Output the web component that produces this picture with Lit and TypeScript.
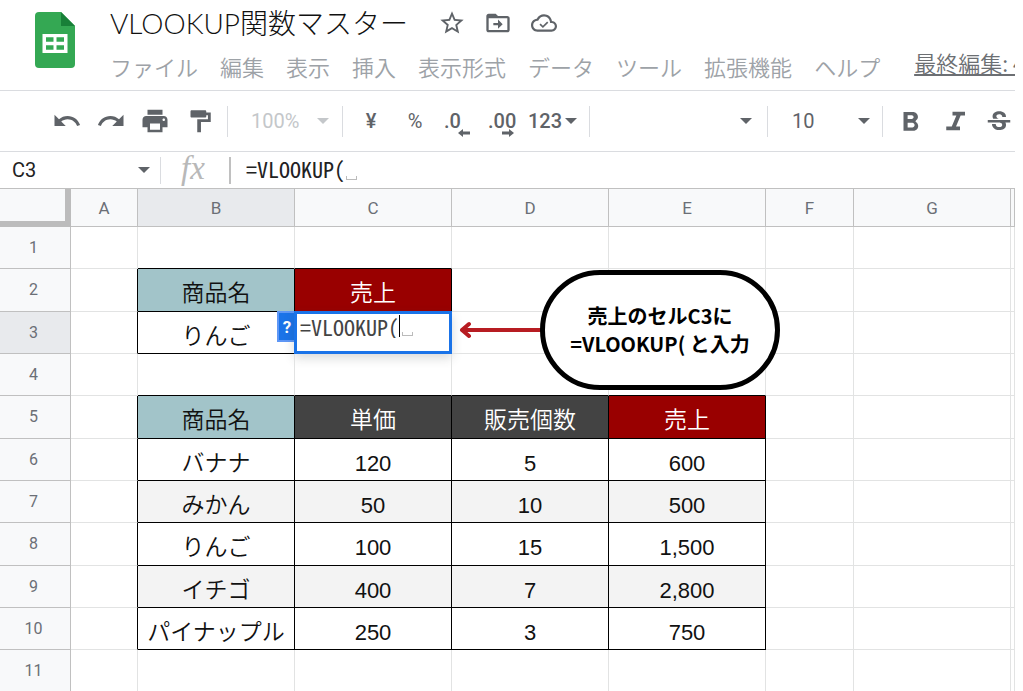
import { LitElement, html, css, svg } from "lit";
import { customElement } from "lit/decorators.js";
import { classMap } from "lit/directives/class-map.js";

type Tone = "teal" | "red" | "dark" | "plain" | "band";
interface Cell {
  text: string;
  tone: Tone;
}

const COLUMNS = ["A", "B", "C", "D", "E", "F", "G", ""];
const ROW_COUNT = 11;
const MENUS = ["ファイル", "編集", "表示", "挿入", "表示形式", "データ", "ツール", "拡張機能", "ヘルプ"];
const FORMULA = "=VLOOKUP(";

const PRODUCTS = [
  ["バナナ", "120", "5", "600"],
  ["みかん", "50", "10", "500"],
  ["りんご", "100", "15", "1,500"],
  ["イチゴ", "400", "7", "2,800"],
  ["パイナップル", "250", "3", "750"],
];

const cells = new Map<string, Cell>();
const put = (ref: string, text: string, tone: Tone) => cells.set(ref, { text, tone });
put("B2", "商品名", "teal");
put("C2", "売上", "red");
put("B3", "りんご", "plain");
put("C3", "", "plain");
put("B5", "商品名", "teal");
put("C5", "単価", "dark");
put("D5", "販売個数", "dark");
put("E5", "売上", "red");
PRODUCTS.forEach((product, i) =>
  product.forEach((text, j) => put(`${COLUMNS[j + 1]}${i + 6}`, text, i % 2 ? "band" : "plain"))
);

const caret = html`<svg class="caret" viewBox="0 0 12 6" aria-hidden="true"><path d="M0 0h12L6 6z" /></svg>`;

const icon = (shape: unknown, size = "") =>
  html`<svg class="icon ${size}" viewBox="0 0 24 24" aria-hidden="true">${shape}</svg>`;

const ICONS = {
  star: svg`<path d="M22 9.24l-7.19-.62L12 2 9.19 8.63 2 9.24l5.46 4.73L5.82 21 12 17.27 18.18 21l-1.63-7.03L22 9.24zM12 15.4l-3.76 2.27 1-4.28-3.32-2.88 4.38-.38L12 6.1l1.71 4.04 4.38.38-3.32 2.88 1 4.28L12 15.4z"/>`,
  move: svg`<path d="M20 6h-8l-2-2H4c-1.1 0-2 .9-2 2v12c0 1.1.9 2 2 2h16c1.1 0 2-.9 2-2V8c0-1.1-.9-2-2-2zm0 12H4V8h16v10zM12 17l4-4-4-4v3H8v2h4z"/><path d="M3 5h7l2 2.500H3z"/>`,
  cloud: svg`<path d="M19.35 10.04C18.67 6.59 15.64 4 12 4 9.11 4 6.6 5.64 5.35 8.04 2.34 8.36 0 10.91 0 14c0 3.31 2.69 6 6 6h13c2.76 0 5-2.24 5-5 0-2.64-2.05-4.78-4.65-4.96zM19 18H6c-2.21 0-4-1.79-4-4 0-2.05 1.53-3.76 3.56-3.97l1.07-.11.5-.95C8.08 7.14 9.94 6 12 6c2.62 0 4.88 1.86 5.39 4.43l.3 1.5 1.53.11c1.56.1 2.78 1.41 2.78 2.96 0 1.65-1.35 3-3 3zm-8-3.5l-2.100-2.100-1.100 1.100 3.200 3.200 5-5-1.100-1.100z"/>`,
  undo: svg`<path d="M12.5 8c-2.65 0-5.05.99-6.9 2.6L2 7v9h9l-3.62-3.62c1.39-1.16 3.16-1.88 5.12-1.88 3.54 0 6.55 2.31 7.6 5.5l2.37-.78C21.08 11.03 17.15 8 12.5 8z"/>`,
  redo: svg`<path d="M18.4 10.6C16.55 8.99 14.15 8 11.5 8c-4.65 0-8.58 3.03-9.96 7.22L3.9 16c1.05-3.19 4.05-5.5 7.6-5.5 1.95 0 3.73.72 5.12 1.88L13 16h9V7l-3.6 3.6z"/>`,
  print: svg`<path d="M19 8H5c-1.66 0-3 1.34-3 3v6h4v4h12v-4h4v-6c0-1.66-1.34-3-3-3zm-3 11H8v-5h8v5zm3-7c-.55 0-1-.45-1-1s.45-1 1-1 1 .45 1 1-.45 1-1 1zm-1-9H6v4h12V3z"/>`,
  paint: svg`<path d="M18 4V3c0-.55-.45-1-1-1H5c-.55 0-1 .45-1 1v4.500c0 .55.45 1 1 1h12c.55 0 1-.45 1-1V6.500h1.500v3.500H10v11.500h3.300V12.500H22V4z"/>`,
  bold: svg`<path transform="translate(0 .8)" d="M15.9 10.79c.97-.67 1.65-1.77 1.65-2.79 0-2.26-1.75-4-4-4H6v15h8.04c2.09 0 3.71-1.7 3.71-3.79 0-1.52-.86-2.82-2.15-3.42zM9.3 6.5h3.3c.83 0 1.5.67 1.5 1.5s-.67 1.5-1.5 1.5H9.3v-3zm3.8 9.9H9.3v-3.9h3.8c.83 0 1.8.8 1.8 1.9s-.97 2-1.8 2z"/>`,
  italic: svg`<path d="M10 4.5v3h3.1l-3.7 8.9H5v3h11v-3h-3.2l3.7-8.9H20v-3z"/>`,
  strike: svg`<path transform="translate(0 1.2)" d="M6.85 7.08C6.85 4.37 9.45 3 12.24 3c1.64 0 3 .49 3.9 1.28.77.65 1.46 1.73 1.46 3.24h-3.01c0-.31-.05-.59-.15-.85-.29-.86-1.2-1.28-2.25-1.28-1.86 0-2.34 1.02-2.34 1.7 0 .48.25.88.74 1.21.38.25.77.48 1.41.7H7.39c-.21-.34-.54-.89-.54-1.92zM21 12v-2H3v2h9.62c1.15.45 1.96.75 1.96 1.97 0 1-.81 1.67-2.28 1.67-1.54 0-2.93-.54-2.93-2.51H6.4c0 .55.08 1.13.24 1.58.81 2.29 3.29 3.3 5.67 3.3 2.27 0 5.3-.89 5.3-4.05 0-.3-.01-1.16-.48-1.94H21V12z"/>`,
};

const controlReset = css`
  :host,
  * {
    box-sizing: border-box;
  }
  button,
  input,
  select {
    appearance: none;
    margin: 0;
    padding: 0;
    border: 0;
    border-radius: 0;
    outline: 0;
    background: none;
    color: inherit;
    font: inherit;
  }
`;

@customElement("doc-header")
export class DocHeader extends LitElement {
  static styles = [
    controlReset,
    css`
      :host {
        display: flex;
        gap: 35px;
        height: 91px;
        padding-left: 35px;
        border-bottom: 1px solid #dadce0;
        overflow: hidden;
      }
      .logo {
        flex: none;
        width: 40px;
        height: 56px;
        margin-top: 12px;
      }
      .info {
        flex: 1;
        min-width: 0;
      }
      .title-row {
        display: flex;
        align-items: center;
        height: 46px;
        gap: 21px;
      }
      .title {
        margin: 0;
        color: #111;
        font: 300 28px/46px Lato, "Noto Sans CJK JP", sans-serif;
        white-space: nowrap;
      }
      .actions {
        display: flex;
        color: #5f6368;
      }
      .action {
        display: grid;
        place-items: center;
        width: 46px;
        height: 46px;
      }
      .icon {
        width: 28px;
        height: 28px;
        fill: currentColor;
      }
      .small {
        width: 26px;
        height: 26px;
      }
      .menu-row {
        display: flex;
        gap: 34px;
        font-size: 22px;
        font-weight: 350;
        white-space: nowrap;
      }
      .menus {
        display: flex;
        gap: 22px;
        color: #9da2a7;
        line-height: 40px;
      }
      .last-edit {
        color: #6c6f73;
        line-height: 32px;
        text-decoration: underline;
      }
    `,
  ];

  render() {
    return html`
      <svg class="logo" viewBox="0 0 40 56" role="img" aria-label="スプレッドシート">
        <path d="M4 0h22l14 14v38a4 4 0 0 1-4 4H4a4 4 0 0 1-4-4V4a4 4 0 0 1 4-4z" fill="#34a853" />
        <path d="M26 0l14 14H26z" fill="#188038" />
        <path fill="#fff" fill-rule="evenodd" d="M7.5 22h25v19h-25zM11 25.300h7.500v4.500H11zM21.500 25.300H29v4.500h-7.500zM11 33.200h7.500v4.500H11zM21.500 33.200H29v4.500h-7.500z" />
      </svg>
      <div class="info">
        <div class="title-row">
          <h1 class="title">VLOOKUP関数マスター</h1>
          <div class="actions">
            <button class="action" aria-label="スターを付ける">${icon(ICONS.star)}</button>
            <button class="action" aria-label="移動">${icon(ICONS.move)}</button>
            <button class="action" aria-label="保存状況">${icon(ICONS.cloud, "small")}</button>
          </div>
        </div>
        <div class="menu-row">
          <nav class="menus">${MENUS.map((name) => html`<button>${name}</button>`)}</nav>
          <a class="last-edit" href="#history">最終編集: 4 分前</a>
        </div>
      </div>
    `;
  }
}

@customElement("tool-bar")
export class ToolBar extends LitElement {
  static styles = [
    controlReset,
    css`
      :host {
        display: flex;
        align-items: center;
        height: 61px;
        padding-left: 45px;
        border-bottom: 1px solid #dadce0;
        color: #5f6368;
        font: 500 20px/24px Roboto, sans-serif;
        overflow: hidden;
      }
      .tool {
        flex: none;
        display: flex;
        align-items: center;
        justify-content: center;
        width: 44px;
        height: 44px;
      }
      .icon {
        width: 30px;
        height: 30px;
        fill: currentColor;
      }
      .medium {
        width: 27px;
        height: 27px;
      }
      .divider {
        flex: none;
        width: 1px;
        height: 31px;
        margin: 0 6px;
        background: #dadce0;
      }
      .caret {
        flex: none;
        width: 12px;
        height: 6px;
        fill: currentColor;
      }
      .regular {
        font-weight: 400;
      }
      .decimal {
        position: relative;
        justify-content: flex-start;
        padding-left: 7px;
      }
      .decimal-arrow {
        position: absolute;
        right: 11px;
        bottom: 6px;
        width: 12px;
        height: 8px;
        fill: currentColor;
      }
      .wide {
        justify-content: flex-start;
        gap: 3px;
        width: 58px;
        padding-left: 3px;
      }
      .picker {
        flex: none;
        display: flex;
        align-items: center;
        font-weight: 400;
      }
      .picker select {
        flex: 1;
        min-width: 0;
      }
      .zoom {
        width: 102px;
        padding: 0 7px 0 17px;
        color: #c4c7ca;
      }
      .family {
        width: 165px;
        padding-right: 9px;
      }
      .size {
        width: 102px;
        padding: 0 6px 0 18px;
      }
    `,
  ];

  render() {
    return html`
      <button class="tool" aria-label="元に戻す">${icon(ICONS.undo)}</button>
      <button class="tool" aria-label="やり直し">${icon(ICONS.redo)}</button>
      <button class="tool" aria-label="印刷">${icon(ICONS.print)}</button>
      <button class="tool" aria-label="書式を貼り付け">${icon(ICONS.paint, "medium")}</button>
      <span class="divider"></span>
      <label class="picker zoom">
        <select aria-label="ズーム"><option>100%</option></select>${caret}
      </label>
      <span class="divider"></span>
      <button class="tool">¥</button>
      <button class="tool regular">%</button>
      <button class="tool decimal">
        <span>.0</span>
        <svg class="decimal-arrow" viewBox="0 0 12 8" aria-hidden="true"><path d="M5 0v2.500h7v3H5V8L0 4z" /></svg>
      </button>
      <button class="tool decimal">
        <span>.00</span>
        <svg class="decimal-arrow" viewBox="0 0 12 8" aria-hidden="true"><path d="M7 0v2.500H0v3h7V8l5-4z" /></svg>
      </button>
      <button class="tool wide">123${caret}</button>
      <span class="divider"></span>
      <label class="picker family">
        <select aria-label="フォント"><option></option></select>${caret}
      </label>
      <span class="divider"></span>
      <label class="picker size">
        <select aria-label="フォントサイズ"><option>10</option></select>${caret}
      </label>
      <span class="divider"></span>
      <button class="tool" aria-label="太字">${icon(ICONS.bold)}</button>
      <button class="tool" aria-label="斜体">${icon(ICONS.italic)}</button>
      <button class="tool" aria-label="取り消し線">${icon(ICONS.strike)}</button>
    `;
  }
}

const formulaText = css`
  .formula {
    width: 99px;
    height: 28px;
    font: 300 22px/28px "Noto Sans Mono CJK JP", "Liberation Mono", monospace;
  }
  .blank {
    width: 11px;
    height: 4px;
    border: 1px solid #bbb;
    border-top: 0;
  }
`;

@customElement("formula-bar")
export class FormulaBar extends LitElement {
  static styles = [
    controlReset,
    formulaText,
    css`
      :host {
        display: flex;
        align-items: center;
        height: 37px;
        border-bottom: 1px solid #c0c0c0;
        color: #222;
      }
      .name {
        display: flex;
        align-items: center;
        width: 161px;
        height: 27px;
        padding: 0 10px 0 12px;
        border-right: 1px solid #dadce0;
      }
      .name-input {
        flex: 1;
        min-width: 0;
        font: 400 20px/24px Roboto, sans-serif;
      }
      .caret {
        width: 12px;
        height: 6px;
        fill: #5f6368;
      }
      .fx {
        width: 70px;
        height: 27px;
        padding-left: 20px;
        border-right: 2px solid #c0c0c0;
        color: #b8b8b8;
        font: italic 400 33px/22px "Liberation Serif", serif;
      }
      .entry {
        display: flex;
        align-items: center;
        padding: 0 0 4px 15px;
      }
      .blank {
        margin: 20px 0 0 1px;
      }
    `,
  ];

  render() {
    return html`
      <label class="name">
        <input class="name-input" aria-label="名前ボックス" .value=${"C3"} />${caret}
      </label>
      <span class="fx">fx</span>
      <label class="entry">
        <input class="formula" aria-label="数式" .value=${FORMULA} /><span class="blank"></span>
      </label>
    `;
  }
}

@customElement("sheet-grid")
export class SheetGrid extends LitElement {
  static styles = [
    controlReset,
    formulaText,
    css`
      :host {
        display: block;
        position: relative;
        overflow: hidden;
      }
      .sheet {
        width: 100%;
        table-layout: fixed;
        border-collapse: separate;
        border-spacing: 0;
        font: 400 22px/32px "Liberation Sans", sans-serif;
      }
      .col-head {
        width: 71px;
      }
      .col-a {
        width: 67px;
      }
      .col-wide {
        width: 157px;
      }
      .col-f {
        width: 88px;
      }
      th {
        padding: 0;
        border: solid #c0c0c0;
        border-width: 0 1px 1px 0;
        background: #f8f9fa;
        color: #6b6f76;
        font: 400 17px/20px Roboto, sans-serif;
      }
      .heads {
        height: 38px;
      }
      .corner {
        border: solid #bcbcbc;
        border-width: 0 6px 6px 0;
      }
      .active {
        background: #e8eaed;
      }
      .row {
        height: 42px;
      }
      .row:nth-child(3n + 2) {
        height: 43px;
      }
      .row th {
        padding-right: 3px;
        font-size: 16px;
      }
      td {
        position: relative;
        padding: 8px 0 0;
        border: solid #e2e3e3;
        border-width: 0 1px 1px 0;
        color: #111;
        text-align: center;
        white-space: nowrap;
      }
      .word {
        padding-top: 2px;
        font: 350 23px/32px "Noto Sans CJK JP", sans-serif;
      }
      .ink-right {
        border-right-color: #000;
      }
      .ink-bottom {
        border-bottom-color: #000;
      }
      .teal {
        background: #a2c4c9;
      }
      .red {
        background: #990000;
        color: #fff;
      }
      .dark {
        background: #434343;
        color: #fff;
      }
      .band {
        background: #f3f3f3;
      }
      .editor {
        position: absolute;
        inset: -1px;
        display: flex;
        align-items: flex-start;
        padding-left: 3px;
        border: 3px solid #1a73e8;
        background: #fff;
        box-shadow: 0 4px 10px rgba(60, 64, 67, 0.2);
        color: #444;
      }
      .editor .formula {
        height: 24px;
        line-height: 24px;
      }
      .cursor {
        width: 1px;
        height: 22px;
        margin-top: 1px;
        background: #000;
      }
      .editor .blank {
        margin: 18px 0 0 2px;
      }
      .help {
        position: absolute;
        top: -1px;
        left: -18px;
        width: 18px;
        height: 31px;
        border: 2px solid #5e97f6;
        border-right: 0;
        background: #1a73e8;
        color: #fff;
        font: 700 17px/26px Roboto, sans-serif;
      }
      .note {
        position: absolute;
        top: 81px;
        left: 459px;
        display: flex;
        align-items: center;
      }
      .arrow {
        width: 83px;
        height: 20px;
        fill: none;
        stroke: #b71c22;
        stroke-width: 4;
        stroke-linecap: round;
        stroke-linejoin: round;
      }
      .bubble {
        display: grid;
        place-content: center;
        width: 240px;
        height: 120px;
        margin: 0 0 0 -2px;
        border: 5px solid #000;
        border-radius: 60px;
        background: #fff;
        color: #000;
        font: 700 20px/28px "Noto Sans CJK JP", sans-serif;
        text-align: center;
      }
    `,
  ];

  private cell(col: number, row: number) {
    const cell = cells.get(`${COLUMNS[col]}${row}`);
    const right = cells.get(`${COLUMNS[col + 1]}${row}`);
    const below = cells.get(`${COLUMNS[col]}${row + 1}`);
    const classes = {
      [cell?.tone ?? "plain"]: true,
      word: Boolean(cell && !/^[\d,]*$/.test(cell.text)),
      "ink-right": Boolean(cell || right),
      "ink-bottom": Boolean(cell || below),
    };
    const editing = COLUMNS[col] === "C" && row === 3;
    return html`<td class=${classMap(classes)}>${editing ? this.editor() : cell?.text}</td>`;
  }

  private editor() {
    return html`
      <button class="help" aria-label="数式のヘルプ">?</button>
      <label class="editor">
        <input class="formula" aria-label="セル C3" .value=${FORMULA} /><span class="cursor"></span
        ><span class="blank"></span>
      </label>
    `;
  }

  render() {
    const rows = Array.from({ length: ROW_COUNT }, (_, i) => i + 1);
    return html`
      <table class="sheet">
        <colgroup>
          <col class="col-head" />
          <col class="col-a" />
          <col class="col-wide" span="4" />
          <col class="col-f" />
          <col class="col-wide" />
          <col />
        </colgroup>
        <thead>
          <tr class="heads">
            <th class="corner"></th>
            ${COLUMNS.map((name) => html`<th scope="col" class=${name === "B" ? "active" : ""}>${name}</th>`)}
          </tr>
        </thead>
        <tbody>
          ${rows.map(
            (row) => html`<tr class="row">
              <th scope="row" class=${row === 3 ? "active" : ""}>${row}</th>
              ${COLUMNS.map((_, col) => this.cell(col, row))}
            </tr>`
          )}
        </tbody>
      </table>
      <div class="note">
        <svg class="arrow" viewBox="0 0 83 20" aria-hidden="true">
          <path d="M83 10H3M10 4L3 10l7 6" />
        </svg>
        <p class="bubble"><span>売上のセルC3に</span><span>=VLOOKUP( と入力</span></p>
      </div>
    `;
  }
}

@customElement("app-root")
export class AppRoot extends LitElement {
  static styles = css`
    :host {
      display: flex;
      flex-direction: column;
      box-sizing: border-box;
      height: 100vh;
      padding-right: 8px;
      background: #fff;
      font-family: "Noto Sans CJK JP", sans-serif;
      overflow: hidden;
    }
    .bar {
      flex: none;
    }
    .grid {
      flex: 1;
      min-height: 0;
    }
  `;

  render() {
    return html`
      <doc-header class="bar"></doc-header>
      <tool-bar class="bar"></tool-bar>
      <formula-bar class="bar"></formula-bar>
      <sheet-grid class="grid"></sheet-grid>
    `;
  }
}
